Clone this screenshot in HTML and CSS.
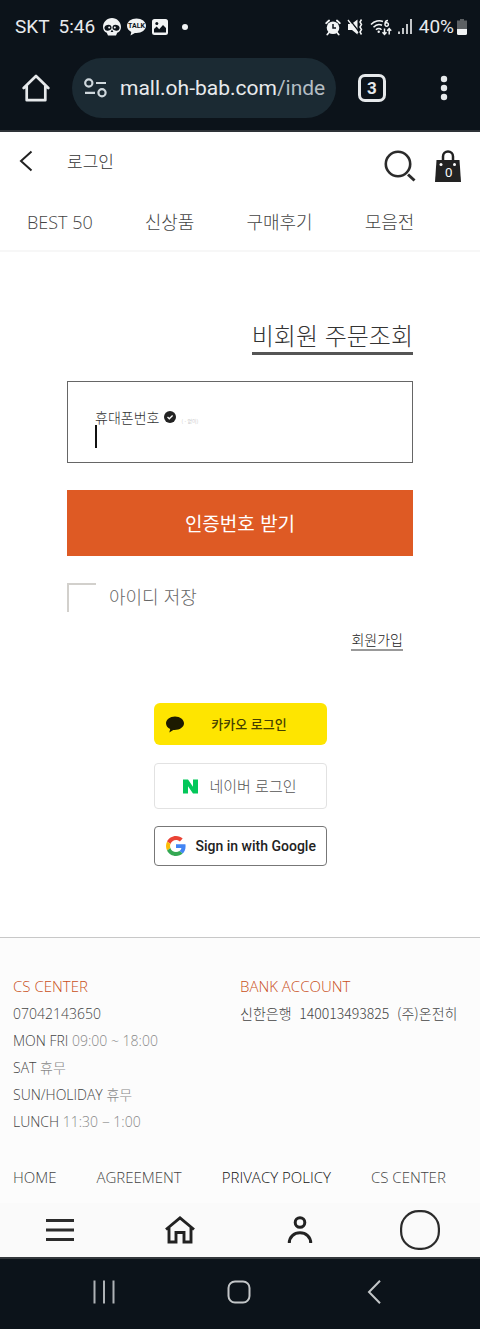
FILE: index.html
```html
<!DOCTYPE html>
<html lang="ko">
<head>
<meta charset="utf-8">
<meta name="viewport" content="width=device-width, initial-scale=1">
<title>로그인</title>
<link rel="stylesheet" href="styles.css">
</head>
<body>
<div class="chrome">
  <div class="status">
    <span>SKT</span>
    <span class="status-time">5:46</span>
    <svg class="status-icon" width="18" height="18" viewBox="0 0 18 18"><path fill="#f1f3f4" d="M9 0C4 0 0 4 0 9c0 3 1.500 4.800 3.800 5.800L5 17.500h8l1.200-2.700C16.500 13.800 18 12 18 9c0-5-4-9-9-9z"/><g fill="#0c131a"><ellipse cx="5" cy="9.800" rx="3.600" ry="2.900" transform="rotate(-15 5 9.800)"/><ellipse cx="13" cy="9.800" rx="3.600" ry="2.900" transform="rotate(15 13 9.800)"/><path d="M9 11.500l1.400 2.500H7.600z"/></g><g fill="#f1f3f4"><circle cx="6.200" cy="9.500" r="1"/><circle cx="11.800" cy="9.500" r="1"/></g></svg>
    <svg class="status-icon" width="19" height="18" viewBox="0 0 19 18"><path fill="#f1f3f4" d="M9.500.5C4.300.5 0 3.700 0 7.800c0 2.700 1.800 5 4.300 6.200L3.500 17.500l4.400-2.600c5.900.7 11.100-2.600 11.100-7.100C19 3.700 14.700.5 9.500.5z"/><text x="9.500" y="10" text-anchor="middle" class="talk">TALK</text></svg>
    <svg class="status-icon" width="16" height="16" viewBox="0 0 16 16"><rect width="16" height="16" rx="2.500" fill="#f1f3f4"/><path fill="#0c131a" d="M2 13.500V10l2.600-2.400 2.600 2.600L11 6l3 3v4.500z"/><circle cx="4.800" cy="4.600" r="1.500" fill="#0c131a"/></svg>
    <i class="status-dot"></i>
    <div class="status-right">
      <svg width="16" height="17" viewBox="0 0 16 17"><circle cx="8" cy="8.700" r="6.300" fill="#f1f3f4"/><path stroke="#f1f3f4" stroke-width="1.800" stroke-linecap="round" d="M1.200 4.200l2.900-2.700M14.800 4.200l-2.900-2.700M4 13.500l-1.700 2M12 13.500l1.700 2"/><path fill="none" stroke="#0c131a" stroke-width="1.500" d="M8 5v4h3"/></svg>
      <svg width="17" height="16" viewBox="0 0 17 16"><path fill="#f1f3f4" d="M1 5h3.500L10.500.5v15L5 11H1z"/><path stroke="#0c131a" stroke-width="1.300" d="M2.500.5l9 11.500"/><path stroke="#f1f3f4" stroke-width="1.300" d="M1 1l10 13"/><path fill="none" stroke="#f1f3f4" stroke-width="1.500" d="M14.500.5L13 3l1.500 2.500L13 8l1.500 2.500L13 13l1.500 2.500"/></svg>
      <svg width="22" height="17" viewBox="0 0 22 17"><g fill="none" stroke="#f1f3f4" stroke-width="1.500"><path d="M1 5.500C4.500 1.700 9.500.9 13 2.500M3.500 8.200C6 5.500 9.500 5 12 6.200M6 10.800c1.500-1.600 4-1.600 5.500 0"/><path d="M18 1.500c-2.300 0-3 1.800-3 3.700M15 5.500a1.700 1.700 0 1 0 3.400 0a1.700 1.700 0 1 0-3.400 0"/><path d="M14.500 9.500v6M12.500 13.300l2 2.200 2-2.200M19.200 15.500v-6M17.200 11.700l2-2.200 2 2.200"/></g><circle cx="8.700" cy="12.800" r="1.200" fill="#f1f3f4"/></svg>
      <svg width="14" height="16" viewBox="0 0 14 16"><path stroke="#f1f3f4" stroke-width="1.600" d="M1 12.500V15M5 9v6M9 5v10M13 0v15"/></svg>
      <span class="battery-text">40%</span>
      <svg width="10" height="16" viewBox="0 0 10 16"><path fill="#5c6063" d="M3 0h4v1.500h3V10H0V1.500h3z"/><path fill="#f1f3f4" d="M0 10h10v4.500Q10 16 8.500 16h-7Q0 16 0 14.500z"/></svg>
    </div>
  </div>
  <div class="toolbar">
    <button class="plain home-button" aria-label="Home"><svg width="28" height="28" viewBox="0 0 28 28"><path fill="none" stroke="#e6e9eb" stroke-width="2.700" stroke-linejoin="round" stroke-linecap="round" d="M1.700 14L14 2l12.300 12M4.700 12v14.200h18.600V12"/></svg></button>
    <div class="address">
      <svg width="23" height="20" viewBox="0 0 23 20"><g fill="none" stroke="#cfd8dd" stroke-width="2.200"><circle cx="4.800" cy="5" r="3.600"/><circle cx="18" cy="14.800" r="3.600"/><path d="M12 5h10M1 14.800h10"/></g></svg>
      <span class="url">mall.oh-bab.com<span class="url-path">/inde</span></span>
    </div>
    <button class="tabs" aria-label="Tabs">3</button>
    <button class="plain menu-button" aria-label="Menu"><svg width="8" height="26" viewBox="0 0 8 26"><g fill="#e6e9eb"><circle cx="4" cy="4" r="3.200"/><circle cx="4" cy="13" r="3.200"/><circle cx="4" cy="22" r="3.200"/></g></svg></button>
  </div>
</div>

<header class="header">
  <button class="plain back" aria-label="뒤로"><svg width="14" height="22" viewBox="0 0 14 22"><path fill="none" stroke="#222" stroke-width="2" d="M12.500 1.500L2 11l10.500 9.500"/></svg></button>
  <h1 class="page-title">로그인</h1>
  <button class="plain" aria-label="검색"><svg width="32" height="32" viewBox="0 0 32 32"><g fill="none" stroke="#2b2b2b"><circle cx="14" cy="14" r="12.200" stroke-width="2.600"/><path stroke-width="3" d="M24 24.500l6.500 6"/></g></svg></button>
  <button class="plain bag" aria-label="장바구니"><svg width="26" height="32" viewBox="0 0 26 32"><path fill="none" stroke="#222" stroke-width="2.500" d="M8 11V6.500a5 5 0 0 1 10 0V11"/><path fill="#222" d="M1.500 10h23L26 32H0z"/><circle cx="6" cy="14.500" r="1.500" fill="#fff"/><circle cx="19.500" cy="14.500" r="1.500" fill="#fff"/></svg><span class="bag-count">0</span></button>
</header>
<nav class="nav">
  <a href="#">BEST 50</a><a href="#">신상품</a><a href="#">구매후기</a><a href="#">모음전</a>
</nav>

<main class="main">
  <div class="title-row"><a class="guest" href="#">비회원 주문조회</a></div>
  <form class="form">
    <div class="field">
      <label class="label" for="phone">휴대폰번호
        <svg width="12" height="12" viewBox="0 0 12 12"><circle cx="6" cy="6" r="6" fill="#222"/><path fill="none" stroke="#fff" stroke-width="1.300" d="M3.500 6l1.800 1.800 3.300-3.300"/></svg>
        <small class="hint">( - 없이)</small>
      </label>
      <input class="phone" id="phone" type="tel">
    </div>
    <button class="submit" type="button">인증번호 받기</button>
    <div class="save"><input class="check" id="save" type="checkbox"><label for="save">아이디 저장</label></div>
    <div class="join-row"><a class="join" href="#">회원가입</a></div>
  </form>
  <div class="social">
    <button class="social-button kakao"><svg width="18" height="17" viewBox="0 0 18 17"><path fill="#1c1a00" d="M9 .5C4 .5 0 3.500 0 7.300c0 2.500 1.700 4.600 4.200 5.800L3.300 16.500l4-2.500C13 14.500 18 11.500 18 7.300 18 3.500 14 .5 9 .5z"/></svg><span>카카오 로그인</span></button>
    <button class="social-button naver"><svg width="15" height="15" viewBox="0 0 15 15"><path fill="#03c75a" d="M0 .5h5l5 7.200V.5h5v14h-5L5 7.300v7.200H0z"/></svg><span>네이버 로그인</span></button>
    <button class="social-button google"><svg width="20" height="20" viewBox="0 0 48 48"><path fill="#ea4335" d="M24 9.500c3.540 0 6.710 1.220 9.210 3.600l6.850-6.850C35.900 2.380 30.470 0 24 0 14.620 0 6.510 5.380 2.560 13.220l7.980 6.190C12.430 13.720 17.740 9.500 24 9.500z"/><path fill="#4285f4" d="M46.980 24.550c0-1.570-.150-3.090-.380-4.550H24v9.020h12.940c-.580 2.960-2.260 5.480-4.780 7.180l7.730 6c4.510-4.180 7.090-10.360 7.090-17.650z"/><path fill="#fbbc05" d="M10.530 28.590c-.480-1.450-.760-2.990-.760-4.590s.270-3.140.760-4.590l-7.980-6.190C.920 16.460 0 20.120 0 24c0 3.880.920 7.540 2.560 10.780l7.970-6.190z"/><path fill="#34a853" d="M24 48c6.480 0 11.930-2.130 15.890-5.810l-7.730-6c-2.150 1.450-4.920 2.300-8.160 2.300-6.260 0-11.570-4.220-13.470-9.910l-7.980 6.190C6.510 42.620 14.620 48 24 48z"/></svg><span>Sign in with Google</span></button>
  </div>
</main>

<footer class="footer">
  <div class="columns">
    <section>
      <h2>CS CENTER</h2>
      <p>07042143650</p>
      <p>MON FRI <span>09:00 ~ 18:00</span></p>
      <p>SAT <span>휴무</span></p>
      <p>SUN/HOLIDAY <span>휴무</span></p>
      <p>LUNCH <span>11:30 − 1:00</span></p>
    </section>
    <section>
      <h2>BANK ACCOUNT</h2>
      <p class="account">신한은행&nbsp; 140013493825&nbsp; (주)온전히</p>
    </section>
  </div>
  <nav class="links"><a href="#">HOME</a><a href="#">AGREEMENT</a><a class="strong" href="#">PRIVACY POLICY</a><a href="#">CS CENTER</a></nav>
</footer>

<nav class="dock">
  <a href="#" aria-label="메뉴"><svg width="28" height="22" viewBox="0 0 28 22"><path stroke="#2b2b2b" stroke-width="2.800" d="M0 1.500h28M0 11h28M0 20.500h28"/></svg></a>
  <a href="#" aria-label="홈"><svg width="30" height="28" viewBox="0 0 30 28"><path fill="none" stroke="#222" stroke-width="2.900" d="M1 13.500L15 2l14 11.500M4 11v15h7V16.500h8V26h7V11"/></svg></a>
  <a href="#" aria-label="내 정보"><svg width="26" height="28" viewBox="0 0 26 28"><g fill="none" stroke="#222" stroke-width="3"><circle cx="13" cy="6.500" r="4.800"/><path d="M2.300 27c0-6 4.700-10.200 10.700-10.200s10.700 4.200 10.700 10.200"/></g></svg></a>
  <a href="#" aria-label="최근 본 상품"><svg width="40" height="40" viewBox="0 0 40 40"><rect x="1.100" y="1.100" width="37.800" height="37.800" rx="17.500" fill="none" stroke="#2b2b2b" stroke-width="2.200"/></svg></a>
</nav>
<div class="system">
  <button class="plain" aria-label="Recents"><svg width="22" height="24" viewBox="0 0 22 24"><path stroke="#aeb2b5" stroke-width="2" d="M1.500 .500v23M11 .500v23M20.500 .500v23"/></svg></button>
  <button class="plain" aria-label="Home"><svg width="24" height="24" viewBox="0 0 24 24"><rect x="1.500" y="1.500" width="21" height="21" rx="6.500" fill="none" stroke="#c3c6c8" stroke-width="2"/></svg></button>
  <button class="plain" aria-label="Back"><svg width="14" height="24" viewBox="0 0 14 24"><path fill="none" stroke="#c3c6c8" stroke-width="2" d="M13 .800L2 12l11 11.200"/></svg></button>
</div>
</body>
</html>
```

FILE: styles.css
```css
* { box-sizing: border-box; }
body {
  margin: 0;
  background: #fff;
  color: #444;
  font: 300 17px/24px "Noto Sans CJK KR", "Noto Sans", sans-serif;
}
a { color: inherit; text-decoration: none; }
svg { display: block; flex: none; }
button, input { font: inherit; }
h1, h2, p { margin: 0; font-weight: 300; }
.plain { display: flex; padding: 0; border: 0; background: none; color: inherit; }

.chrome { background: #0c131a; border-bottom: 2px solid #2e3338; font-family: Roboto, sans-serif; font-weight: 400; color: #e8eaed; }
.status { display: flex; align-items: center; height: 54px; padding: 0 13px 0 15px; font-size: 19px; }
.status-time { margin: 0 2px 0 9px; }
.status-icon { margin-left: 6px; }
.status-dot { width: 6px; height: 6px; margin-left: 14px; border-radius: 50%; background: #f1f3f4; }
.status-right { display: flex; align-items: center; gap: 6px; margin-left: auto; }
.battery-text { margin: 0 -3px 0 1px; }
.talk { font: 700 7px Roboto, sans-serif; fill: #0c131a; }
.toolbar { display: flex; align-items: center; padding: 4px 32px 12px 22px; }
.home-button { margin-right: 22px; }
.address { display: flex; align-items: center; gap: 13px; flex: 1; min-width: 0; height: 60px; padding: 0 8px 0 12px; border-radius: 30px; background: #1b2a33; }
.url { flex: 1; white-space: nowrap; font-size: 21px; line-height: 30px; }
.url-path { color: #b4bdc3; }
.tabs { width: 28px; height: 28px; margin: 0 54px 0 22px; padding: 0; border: 3px solid #e6e9eb; border-radius: 7px; background: none; color: #e6e9eb; font-size: 17px; font-weight: 700; line-height: 20px; }

.header { display: flex; align-items: center; padding: 17px 19px 0 19px; }
.page-title { flex: 1; margin-left: 34px; padding-bottom: 9px; font-size: 17px; color: #333; }
.back { margin-bottom: 9px; }
.bag { position: relative; margin-left: 19px; }
.bag-count { position: absolute; left: 10px; top: 14px; color: #fff; font: 400 13px/16px "Noto Sans", sans-serif; }
.nav { display: flex; gap: 52px; padding: 28px 27px 16px; border-bottom: 2px solid #f7f7f7; font-family: "Open Sans", "Noto Sans CJK KR", sans-serif; font-size: 18px; white-space: nowrap; }

.main { padding: 66px 67px 71px; }
.title-row { display: flex; justify-content: flex-end; }
.guest { border-bottom: 3px solid #555; font-size: 24px; line-height: 34px; color: #333; }
.field { display: flex; flex-direction: column; height: 82px; margin-top: 26px; padding: 26px 27px 0; border: 1px solid #666; }
.label { display: flex; align-items: center; gap: 5px; height: 17px; font-size: 14px; color: #333; }
.hint { padding-top: 8px; font-size: 5px; line-height: 8px; color: #aaa; }
.phone { width: 100%; height: 23px; padding: 0; border: 0; border-left: 2px solid #111; background: none; outline: 0; }
.submit { display: block; width: 100%; height: 66px; margin-top: 27px; padding: 0; border: 0; background: #de5a24; color: #fff; font-size: 19px; font-weight: 400; }
.save { display: flex; align-items: flex-start; gap: 13px; margin-top: 27px; font-size: 18px; line-height: 26px; color: #666; }
.check { appearance: none; width: 29px; height: 29px; margin: 0; border: 0 solid #d2d0cc; border-width: 2px 0 0 2px; }
.join-row { display: flex; justify-content: flex-end; padding: 17px 10px 0; }
.join { border-bottom: 2px solid #999; font-size: 14px; line-height: 20px; color: #222; }
.social { display: flex; flex-direction: column; width: 50%; margin: 52px auto 0; }
.social-button { display: flex; align-items: center; height: 42px; padding: 0 12px; border: 0; border-radius: 6px; background: #fff; }
.kakao { background: #fee500; color: #453f00; font-size: 13px; font-weight: 500; }
.kakao span { flex: 1; text-align: center; }
.naver { justify-content: center; gap: 11px; height: 46px; margin-top: 18px; border: 1px solid #e2e2e2; border-radius: 4px; color: #555; font-size: 15px; }
.google { gap: 10px; height: 40px; margin-top: 17px; padding: 0 11px; border: 1px solid #777; border-radius: 4px; color: #222; font: 500 14px Roboto, sans-serif; white-space: nowrap; }

.footer { padding: 35px 13px 12px; border-top: 1px solid #c8c8c8; background: #fcfcfc; font-family: "Open Sans", "Noto Sans CJK KR", sans-serif; font-size: 14px; line-height: 27px; }
.columns { display: grid; grid-template-columns: 1fr 1fr; }
.columns section { white-space: nowrap; }
.columns h2 { font-size: 15px; line-height: 27px; color: #c94f20; }
.columns p span { color: #888; }
.account { font-family: "Noto Sans CJK KR", sans-serif; }
.links { display: flex; gap: 40px; margin-top: 29px; font-size: 15px; white-space: nowrap; }
.links .strong { color: #111; }
.dock { display: grid; grid-template-columns: repeat(4, 1fr); align-items: center; justify-items: center; height: 54px; background: #fafafa; }
.system { display: grid; grid-template-columns: repeat(3, 1fr); align-items: center; justify-items: center; height: 72px; padding: 0 39px 4px 36px; border-top: 2px solid #34383c; background: #0c131a; }
```
